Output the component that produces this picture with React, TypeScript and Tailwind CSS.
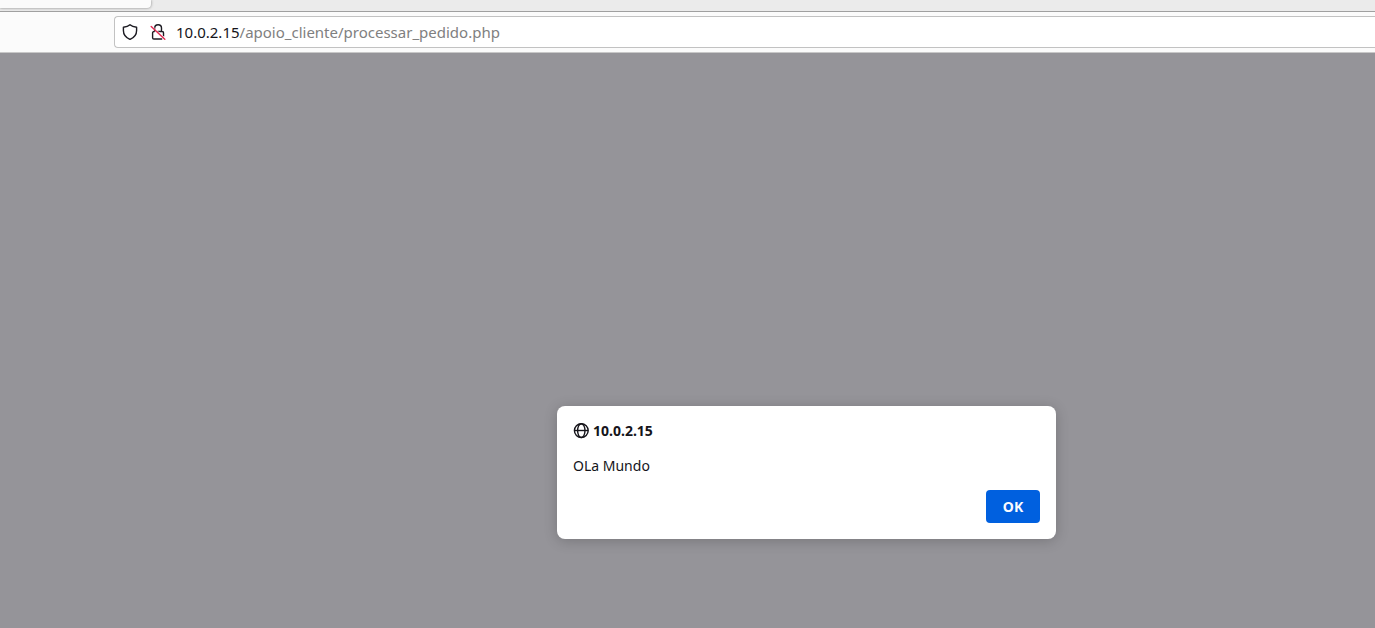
import React from "react";

function ShieldIcon() {
  return (
    <svg viewBox="0 0 16 16" className="h-4 w-4" fill="none" stroke="#1c1b22" strokeWidth="1.4" strokeLinejoin="round" aria-hidden="true">
      <path d="M8 .8C6.400 2.300 4.100 3 1.400 3.200V6.500C1.400 10.400 3.700 13.600 8 15.400C12.300 13.600 14.600 10.400 14.600 6.500V3.200C11.900 3 9.600 2.300 8 .8Z" />
    </svg>
  );
}

function InsecureLockIcon() {
  return (
    <svg viewBox="0 0 16 16" className="h-4 w-4" fill="none" aria-hidden="true">
      <path
        d="M4.700 7.500V4.100a3.400 3.400 0 0 1 6.800 0V7.500M7.500 7.500H12.200a1.300 1.300 0 0 1 1.300 1.300V12.500M12.200 15H3.900a1.300 1.300 0 0 1-1.300-1.300V8.800a1.300 1.300 0 0 1 1.300-1.300H4.700"
        stroke="#1c1b22"
        strokeWidth="1.400"
      />
      <path d="M1.800 1.600L15.500 14.500" stroke="#ffffff" strokeWidth=".7" />
      <path d="M1.200 2.400L14.800 15.300" stroke="#e22850" strokeWidth="1.400" strokeLinecap="round" />
    </svg>
  );
}

function GlobeIcon() {
  return (
    <svg viewBox="0 0 16 16" className="h-4 w-4" fill="none" stroke="#15141a" strokeWidth="1.400" aria-hidden="true">
      <circle cx="8.300" cy="7.600" r="6.900" />
      <ellipse cx="8.300" cy="7.600" rx="3.700" ry="6.900" />
      <path d="M1.400 7.500H15.200" />
    </svg>
  );
}

function TabStrip() {
  return (
    <div className="h-3 overflow-hidden border-b border-[#a0a0a0] bg-[#ebebeb]">
      <div className="h-2 w-[151px] rounded-br bg-[#fbfbfb] shadow-[0_0_3px_rgba(0,0,0,0.45)]" />
    </div>
  );
}

function AddressBar() {
  return (
    <div className="flex h-[41px] items-center border-b border-[#c8c8c8] bg-[#fbfbfb] pl-[114px]">
      <div className="flex h-8 grow items-center rounded-l border border-r-0 border-[#c2c2c2] bg-white pl-[7px]">
        <button type="button" aria-label="Tracking protection">
          <ShieldIcon />
        </button>
        <button type="button" aria-label="Connection is not secure" className="ml-3">
          <InsecureLockIcon />
        </button>
        <a href="#" className="ml-2.5 text-[15px] leading-5 whitespace-nowrap text-[#808080]">
          <span className="text-[#15141a]">10.0.2.15</span>/apoio_cliente/processar_pedido.php
        </a>
      </div>
    </div>
  );
}

function AlertDialog() {
  return (
    <div
      role="alertdialog"
      aria-labelledby="alert-title"
      aria-describedby="alert-message"
      className="flex w-[499px] flex-col rounded-lg bg-white p-4 text-[#15141a] shadow-[0_2px_14px_rgba(0,0,0,0.2)]"
    >
      <h1 id="alert-title" className="flex items-center gap-1 text-sm leading-[18px] font-bold">
        <GlobeIcon />
        10.0.2.15
      </h1>
      <p id="alert-message" className="mt-4 text-sm leading-5">
        OLa Mundo
      </p>
      <button type="button" className="mt-3.5 h-[33px] w-[54px] self-end rounded bg-[#0060df] text-sm font-bold text-[#fbfbfe]">
        OK
      </button>
    </div>
  );
}

export default function App() {
  return (
    <div className="flex min-h-screen flex-col bg-[#959499] font-['Noto_Sans','Open_Sans',sans-serif]">
      <TabStrip />
      <AddressBar />
      <main className="flex grow items-end justify-center pb-[89px] pl-[238px]">
        <AlertDialog />
      </main>
    </div>
  );
}
